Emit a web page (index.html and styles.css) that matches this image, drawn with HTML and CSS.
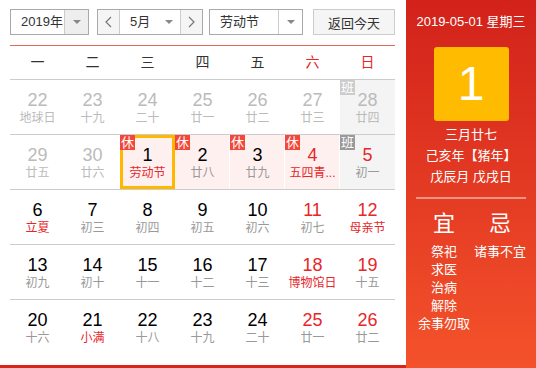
FILE: index.html
```html
<!DOCTYPE html>
<html lang="zh-CN">
<head>
<meta charset="utf-8">
<title>万年历</title>
<link rel="stylesheet" href="styles.css">
</head>
<body>
<div class="cal">
  <div class="main">
    <div class="toolbar">
      <div class="select year"><span class="val">2019年</span><span class="drop"><i class="tri"></i></span></div>
      <div class="month-group">
        <span class="nav prev"><svg width="7" height="12" viewBox="0 0 7 12"><polyline points="6,1 1,6 6,11" fill="none" stroke="#777" stroke-width="1.2"/></svg></span>
        <div class="mselect"><span class="val">5月</span><i class="tri"></i></div>
        <span class="nav next"><svg width="7" height="12" viewBox="0 0 7 12"><polyline points="1,1 6,6 1,11" fill="none" stroke="#777" stroke-width="1.2"/></svg></span>
      </div>
      <div class="select holiday"><span class="val">劳动节</span><span class="drop"><i class="tri"></i></span></div>
      <button class="today">返回今天</button>
    </div>
    <div class="weekdays">
      <span>一</span><span>二</span><span>三</span><span>四</span><span>五</span><span class="we">六</span><span class="we">日</span>
    </div>
    <div class="week">
      <div class="day other"><b>22</b><small>地球日</small></div>
      <div class="day other"><b>23</b><small>十九</small></div>
      <div class="day other"><b>24</b><small>二十</small></div>
      <div class="day other"><b>25</b><small>廿一</small></div>
      <div class="day other"><b>26</b><small>廿二</small></div>
      <div class="day other"><b>27</b><small>廿三</small></div>
      <div class="day other work"><span class="badge ban">班</span><b>28</b><small>廿四</small></div>
    </div>
    <div class="week">
      <div class="day other"><b>29</b><small>廿五</small></div>
      <div class="day other"><b>30</b><small>廿六</small></div>
      <div class="day rest sel fest"><span class="badge">休</span><b>1</b><small>劳动节</small></div>
      <div class="day rest"><span class="badge">休</span><b>2</b><small>廿八</small></div>
      <div class="day rest"><span class="badge">休</span><b>3</b><small>廿九</small></div>
      <div class="day rest red fest"><span class="badge">休</span><b>4</b><small>五四青...</small></div>
      <div class="day work red"><span class="badge ban">班</span><b>5</b><small>初一</small></div>
    </div>
    <div class="week">
      <div class="day fest"><b>6</b><small>立夏</small></div>
      <div class="day"><b>7</b><small>初三</small></div>
      <div class="day"><b>8</b><small>初四</small></div>
      <div class="day"><b>9</b><small>初五</small></div>
      <div class="day"><b>10</b><small>初六</small></div>
      <div class="day red"><b>11</b><small>初七</small></div>
      <div class="day red fest"><b>12</b><small>母亲节</small></div>
    </div>
    <div class="week">
      <div class="day"><b>13</b><small>初九</small></div>
      <div class="day"><b>14</b><small>初十</small></div>
      <div class="day"><b>15</b><small>十一</small></div>
      <div class="day"><b>16</b><small>十二</small></div>
      <div class="day"><b>17</b><small>十三</small></div>
      <div class="day red fest"><b>18</b><small>博物馆日</small></div>
      <div class="day red"><b>19</b><small>十五</small></div>
    </div>
    <div class="week last">
      <div class="day"><b>20</b><small>十六</small></div>
      <div class="day fest"><b>21</b><small>小满</small></div>
      <div class="day"><b>22</b><small>十八</small></div>
      <div class="day"><b>23</b><small>十九</small></div>
      <div class="day"><b>24</b><small>二十</small></div>
      <div class="day red"><b>25</b><small>廿一</small></div>
      <div class="day red"><b>26</b><small>廿二</small></div>
    </div>
  </div>
  <aside class="side">
    <div class="date">2019-05-01 星期三</div>
    <div class="big">1</div>
    <div class="lunar">
      <div>三月廿七</div>
      <div>己亥年【猪年】</div>
      <div>戊辰月 戊戌日</div>
    </div>
    <div class="divider"></div>
    <div class="yiji">
      <div class="col">
        <div class="head">宜</div>
        <div>祭祀</div>
        <div>求医</div>
        <div>治病</div>
        <div>解除</div>
        <div>余事勿取</div>
      </div>
      <div class="col">
        <div class="head">忌</div>
        <div>诸事不宜</div>
      </div>
    </div>
  </aside>
</div>
</body>
</html>
```

FILE: styles.css
```css
body {
  margin: 0;
  background: #fff;
  font-family: "Liberation Sans", "Noto Sans CJK SC", sans-serif;
}

.cal {
  display: flex;
  width: 536px;
  height: 368px;
}

.main {
  width: 406px;
  height: 368px;
  box-sizing: border-box;
  padding: 0 11px 0 10px;
  border-bottom: 3px solid #d8251c;
}

.toolbar {
  height: 46px;
  box-sizing: border-box;
  padding-top: 9px;
  border-bottom: 1px solid #e2685b;
  display: flex;
  align-items: flex-start;
}

.select {
  height: 26px;
  box-sizing: border-box;
  border: 1px solid #a9a9a9;
  display: flex;
  font-size: 13px;
  color: #333;
}

.year { width: 79px; }

.holiday {
  width: 94px;
  margin-left: 6px;
}

.val {
  flex: 1;
  padding-left: 10px;
  line-height: 24px;
}

.drop {
  width: 23px;
  background: #eee;
  border-left: 1px solid #ccc;
  display: flex;
  align-items: center;
  justify-content: center;
}

.holiday .drop { background: #fff; }

.tri {
  width: 0;
  height: 0;
  border-left: 4px solid transparent;
  border-right: 4px solid transparent;
  border-top: 4px solid #888;
}

.month-group {
  margin-left: 8px;
  width: 106px;
  height: 26px;
  box-sizing: border-box;
  border: 1px solid #a9a9a9;
  display: flex;
  font-size: 13px;
  color: #333;
}

.nav {
  width: 21px;
  background: #f5f5f5;
  display: flex;
  align-items: center;
  justify-content: center;
}

.prev { border-right: 1px solid #ccc; }
.next { border-left: 1px solid #ccc; }

.mselect {
  flex: 1;
  display: flex;
  align-items: center;
  padding-right: 7px;
}

.today {
  margin-left: 10px;
  width: 82px;
  height: 26px;
  padding: 0;
  border: 1px solid #ccc;
  background: #f5f5f5;
  font-family: inherit;
  font-size: 13px;
  color: #333;
}

.weekdays {
  display: grid;
  grid-template-columns: repeat(7, 55px);
  height: 34px;
  box-sizing: border-box;
  border-bottom: 1px solid #ccc;
  line-height: 33px;
  font-size: 14px;
  color: #333;
  text-align: center;
}

.weekdays .we { color: #e8262a; }

.week {
  display: grid;
  grid-template-columns: repeat(7, 55px);
  height: 55px;
  box-sizing: border-box;
  border-bottom: 1px solid #ccc;
}

.week.last {
  height: 65px;
  border-bottom: none;
}

.day {
  position: relative;
  text-align: center;
  padding-top: 10px;
  height: 54px;
  box-sizing: border-box;
}

.day b {
  display: block;
  font-weight: normal;
  font-size: 18px;
  line-height: 20px;
  color: #000;
}

.day small {
  display: block;
  font-size: 12px;
  line-height: 17px;
  color: #999;
}

.other b,
.other small { color: #bbb; }

.red b { color: #e8262a; }
.fest small { color: #e8262a; }

.rest {
  background: #fff0f0;
  box-shadow: inset -1px 0 #fff;
}

.work { background: #f4f4f4; }

.sel { box-shadow: inset 0 0 0 3px #ffb800; }

.badge {
  position: absolute;
  left: 0;
  top: 0;
  width: 15px;
  height: 15px;
  font-size: 13px;
  line-height: 15px;
  color: #fff;
  background: #f2473a;
}

.badge.ban { background: #999; }
.other .badge.ban { background: #ccc; }

.side {
  width: 130px;
  background: linear-gradient(#d2221b, #f4522b);
  color: #fff;
  display: flex;
  flex-direction: column;
  align-items: center;
  text-align: center;
}

.date {
  margin-top: 14px;
  font-size: 13px;
  line-height: 16px;
}

.big {
  margin-top: 17px;
  width: 75px;
  height: 74px;
  background: #ffbb00;
  border-radius: 3px;
  font-size: 48px;
  line-height: 74px;
}

.lunar {
  margin-top: 3px;
  font-size: 13px;
  line-height: 21px;
}

.divider {
  margin-top: 10px;
  width: 110px;
  height: 2px;
  background: rgba(255, 255, 255, 0.45);
}

.yiji {
  margin-top: 12px;
  display: grid;
  grid-template-columns: 58px 54px;
  font-size: 13px;
  line-height: 18px;
}

.yiji .head {
  font-size: 22px;
  line-height: 26px;
  margin-bottom: 6px;
}
```
